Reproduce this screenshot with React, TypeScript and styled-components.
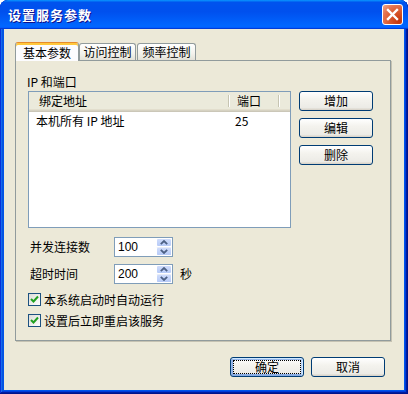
import React from 'react';
import styled, { createGlobalStyle } from 'styled-components';

const GlobalStyle = createGlobalStyle`
  html, body {
    margin: 0;
    padding: 0;
    background: #ffffff;
  }
  body {
    font-family: "Noto Sans CJK SC", "Liberation Sans", sans-serif;
    font-size: 12px;
    color: #000;
  }
`;

const Window = styled.div`
  width: 408px;
  height: 394px;
  box-sizing: border-box;
  display: flex;
  flex-direction: column;
  padding: 0 4px 4px;
  border-radius: 8px 8px 0 0;
  overflow: hidden;
  background: #0055ea;
  box-shadow: inset -1px -1px #00138c, inset 1px 1px #0831d9,
    inset -2px -2px #001ea0, inset 2px 2px #166aee, inset -3px -3px #003bda,
    inset 3px 3px #0855dd;
`;

const TitleBar = styled.div`
  height: 29px;
  margin: 0 -4px;
  padding: 0 5px 0 8px;
  box-sizing: border-box;
  display: flex;
  align-items: center;
  justify-content: space-between;
  border-radius: 8px 8px 0 0;
  background: linear-gradient(
    180deg,
    #0997ff,
    #0053ee 8%,
    #0050ee 40%,
    #0066ff 88%,
    #0066ff 93%,
    #005bff 95%,
    #003dd7 96%,
    #003dd7
  );
`;

const Title = styled.span`
  color: #fff;
  font-weight: bold;
  font-size: 13px;
  letter-spacing: 1px;
  line-height: 16px;
  text-shadow: 1px 1px #0f1089;
`;

const CloseButton = styled.div`
  width: 21px;
  height: 21px;
  box-sizing: border-box;
  border: 1px solid #fff;
  border-radius: 3px;
  display: flex;
  align-items: center;
  justify-content: center;
  background: radial-gradient(
    circle at 85% 85%,
    #c4350a 0%,
    #da5a2e 45%,
    #e37350 70%,
    #f2a88c 100%
  );
`;

const Body = styled.div`
  flex: 1;
  background: #ece9d8;
  padding: 13px 13px 0 11px;
  display: flex;
  flex-direction: column;
`;

const TabStrip = styled.div`
  display: flex;
  align-items: flex-end;
  height: 19px;
  margin-bottom: -1px;
  position: relative;
  z-index: 1;
`;

const Tab = styled.div<{ $active?: boolean; $w: number; $gap?: number }>`
  width: ${(p) => p.$w}px;
  height: ${(p) => (p.$active ? 19 : 17)}px;
  margin-left: ${(p) => p.$gap ?? 0}px;
  margin-bottom: ${(p) => (p.$active ? 0 : 1)}px;
  box-sizing: border-box;
  border: 1px solid #919b9c;
  border-bottom: none;
  border-radius: 3px 3px 0 0;
  display: flex;
  align-items: center;
  justify-content: center;
  line-height: 14px;
  background: ${(p) =>
    p.$active ? '#fcfcfe' : 'linear-gradient(180deg, #ffffff, #f3f2ec 60%, #e3e1d7)'};
  ${(p) =>
    p.$active &&
    `
    border-top-color: #e68b2c;
    box-shadow: inset 0 2px #ffc83c;
    padding-top: 2px;
  `}
`;

const Panel = styled.div`
  height: 281px;
  box-sizing: border-box;
  border: 1px solid #919b9c;
  box-shadow: 1px 1px 0 #c5c2b2;
  padding: 14px 12px 0;
  display: flex;
  flex-direction: column;
`;

const SectionLabel = styled.div`
  line-height: 14px;
  margin-left: -1px;
`;

const ListArea = styled.div`
  display: flex;
  gap: 8px;
  margin-top: 2px;
`;

const ListBox = styled.div`
  width: 263px;
  height: 137px;
  box-sizing: border-box;
  border: 1px solid #7f9db9;
  background: #fff;
`;

const ListHeader = styled.div`
  height: 20px;
  box-sizing: border-box;
  padding-bottom: 3px;
  display: flex;
  align-items: center;
  background: #ebeadb;
  box-shadow: inset 0 -1px #cbc7b8, inset 0 -2px #d6d2c2, inset 0 -3px #e2decd;
`;

const Cell = styled.div<{ $w: number; $pad: number }>`
  width: ${(p) => p.$w}px;
  box-sizing: border-box;
  padding-left: ${(p) => p.$pad}px;
  line-height: 15px;
  white-space: nowrap;
`;

const HeaderSep = styled.div`
  width: 1px;
  height: 12px;
  background: #c7c5b2;
  box-shadow: 1px 0 #fff;
  margin-right: 1px;
`;

const ListRow = styled.div`
  display: flex;
  height: 15px;
  margin-top: 1px;
`;

const SideButtons = styled.div`
  display: flex;
  flex-direction: column;
  gap: 7px;
`;

const Button = styled.div<{ $focused?: boolean }>`
  width: 74px;
  height: 20px;
  box-sizing: border-box;
  border: 1px solid #003c74;
  border-radius: 3px;
  display: flex;
  padding: ${(p) => (p.$focused ? '2px' : '0')};
  background: linear-gradient(180deg, #ffffff, #f4f3ee 40%, #ecebe6 86%, #d6d0c5);
  ${(p) =>
    p.$focused &&
    `
    box-shadow: inset -1px 1px #cee7ff, inset 1px 2px #98b8ea,
      inset -2px 2px #bcd4f6, inset 1px -1px #89ade4, inset 2px -2px #89ade4;
  `}
`;

const ButtonLabel = styled.span<{ $focused?: boolean }>`
  flex: 1;
  display: flex;
  align-items: center;
  justify-content: center;
  line-height: 14px;
  border: 1px dotted ${(p) => (p.$focused ? '#000' : 'transparent')};
`;

const SpinRow = styled.div<{ $top: number }>`
  display: flex;
  align-items: center;
  height: 20px;
  margin-top: ${(p) => p.$top}px;
`;

const SpinLabel = styled.div`
  width: 86px;
  box-sizing: border-box;
  padding-left: 2px;
  line-height: 14px;
`;

const SpinBox = styled.div`
  width: 59px;
  height: 20px;
  box-sizing: border-box;
  border: 1px solid #7f9db9;
  background: #fff;
  display: flex;
`;

const SpinValue = styled.div`
  flex: 1;
  padding-left: 3px;
  font-family: "Liberation Sans", sans-serif;
  font-size: 12px;
  line-height: 18px;
`;

const SpinButtons = styled.div`
  width: 16px;
  display: flex;
  flex-direction: column;
`;

const SpinArrow = styled.div`
  flex: 1;
  display: flex;
  align-items: center;
  justify-content: center;
  border-radius: 2px;
  border: 1px solid #fff;
  box-sizing: border-box;
  background: linear-gradient(180deg, #cfdcfb, #b6caf7);
  & + & {
    border-top-color: #e8ecf8;
  }
`;

const Unit = styled.span`
  margin-left: 7px;
  line-height: 14px;
`;

const CheckRow = styled.div<{ $top: number }>`
  display: flex;
  align-items: center;
  gap: 3px;
  height: 13px;
  margin-top: ${(p) => p.$top}px;
  line-height: 14px;
`;

const CheckBox = styled.div`
  width: 13px;
  height: 13px;
  box-sizing: border-box;
  border: 1px solid #1c5180;
  background: linear-gradient(135deg, #dcdcd7, #ffffff);
  display: flex;
  align-items: center;
  justify-content: center;
`;

const Footer = styled.div`
  display: flex;
  justify-content: flex-end;
  gap: 7px;
  margin-top: 16px;
  padding-right: 6px;
`;

const CloseIcon = () => (
  <svg width="13" height="13" viewBox="0 0 13 13">
    <path d="M2 2 L11 11 M11 2 L2 11" stroke="#fff" strokeWidth="2.4" strokeLinecap="square" />
  </svg>
);

const Arrow = ({ up }: { up?: boolean }) => (
  <svg width="8" height="5" viewBox="0 0 8 5">
    <path
      d={up ? 'M0.8 4.2 L4 1 L7.2 4.2' : 'M0.8 0.8 L4 4 L7.2 0.8'}
      stroke="#4d6185"
      strokeWidth="1.8"
      fill="none"
    />
  </svg>
);

const Check = () => (
  <svg width="9" height="9" viewBox="0 0 9 9">
    <path d="M1 4 L3.5 6.5 L8 1.5" stroke="#21a121" strokeWidth="2" fill="none" />
  </svg>
);

const Spinner = ({ value }: { value: string }) => (
  <SpinBox>
    <SpinValue>{value}</SpinValue>
    <SpinButtons>
      <SpinArrow>
        <Arrow up />
      </SpinArrow>
      <SpinArrow>
        <Arrow />
      </SpinArrow>
    </SpinButtons>
  </SpinBox>
);

const sideActions = ['增加', '编辑', '删除'];

export default function App() {
  return (
    <>
      <GlobalStyle />
      <Window>
        <TitleBar>
          <Title>设置服务参数</Title>
          <CloseButton>
            <CloseIcon />
          </CloseButton>
        </TitleBar>
        <Body>
          <TabStrip>
            <Tab $active $w={64}>基本参数</Tab>
            <Tab $w={57}>访问控制</Tab>
            <Tab $w={59} $gap={1}>
              频率控制
            </Tab>
          </TabStrip>
          <Panel>
            <SectionLabel>IP 和端口</SectionLabel>
            <ListArea>
              <ListBox>
                <ListHeader>
                  <Cell $w={199} $pad={10}>
                    绑定地址
                  </Cell>
                  <HeaderSep />
                  <Cell $w={48} $pad={7}>
                    端口
                  </Cell>
                  <HeaderSep />
                </ListHeader>
                <ListRow>
                  <Cell $w={201} $pad={7}>
                    本机所有 IP 地址
                  </Cell>
                  <Cell $w={50} $pad={5}>
                    25
                  </Cell>
                </ListRow>
              </ListBox>
              <SideButtons>
                {sideActions.map((label) => (
                  <Button key={label}>
                    <ButtonLabel>{label}</ButtonLabel>
                  </Button>
                ))}
              </SideButtons>
            </ListArea>
            <SpinRow $top={9}>
              <SpinLabel>并发连接数</SpinLabel>
              <Spinner value="100" />
            </SpinRow>
            <SpinRow $top={7}>
              <SpinLabel>超时时间</SpinLabel>
              <Spinner value="200" />
              <Unit>秒</Unit>
            </SpinRow>
            <CheckRow $top={9}>
              <CheckBox>
                <Check />
              </CheckBox>
              本系统启动时自动运行
            </CheckRow>
            <CheckRow $top={8}>
              <CheckBox>
                <Check />
              </CheckBox>
              设置后立即重启该服务
            </CheckRow>
          </Panel>
          <Footer>
            <Button $focused>
              <ButtonLabel $focused>确定</ButtonLabel>
            </Button>
            <Button>
              <ButtonLabel>取消</ButtonLabel>
            </Button>
          </Footer>
        </Body>
      </Window>
    </>
  );
}
